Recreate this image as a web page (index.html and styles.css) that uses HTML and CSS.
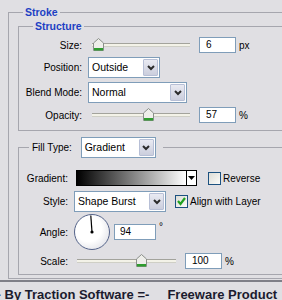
FILE: index.html
```html
<!DOCTYPE html>
<html lang="en">
<head>
  <meta charset="UTF-8" />
  <title>Layer Style – Stroke</title>
  <link rel="stylesheet" href="styles.css">
</head>
<body>

  <div class="panel">
    <fieldset class="group outer">
      <legend class="title">Stroke</legend>

      <fieldset class="group structure">
        <legend class="title">Structure</legend>

        <div class="row">
          <span class="lbl">Size:</span>
          <div class="slider">
            <div class="track"></div>
            <span class="thumb" style="left: calc(6% - 5px)">
              <svg width="11" height="13" viewBox="0 0 11 13"><path d="M5.5 0.5 L10.5 5 L10.5 12.5 L0.5 12.5 L0.5 5 Z" fill="#eeeeea" stroke="#8a8f8a"/><rect x="1" y="10" width="9" height="2.5" fill="#2e9c2e"/></svg>
            </span>
          </div>
          <span class="field">6</span>
          <span class="unit">px</span>
        </div>

        <div class="row">
          <span class="lbl">Position:</span>
          <div class="select sel-position">
            <span class="value">Outside</span>
            <span class="drop"><svg width="8" height="6" viewBox="0 0 8 6"><polyline points="1,1 4,4 7,1" fill="none" stroke="#2b2b2b" stroke-width="2"/></svg></span>
          </div>
        </div>

        <div class="row">
          <span class="lbl">Blend Mode:</span>
          <div class="select sel-blend">
            <span class="value">Normal</span>
            <span class="drop"><svg width="8" height="6" viewBox="0 0 8 6"><polyline points="1,1 4,4 7,1" fill="none" stroke="#2b2b2b" stroke-width="2"/></svg></span>
          </div>
        </div>

        <div class="row">
          <span class="lbl">Opacity:</span>
          <div class="slider">
            <div class="track"></div>
            <span class="thumb" style="left: calc(57% - 5px)">
              <svg width="11" height="13" viewBox="0 0 11 13"><path d="M5.5 0.5 L10.5 5 L10.5 12.5 L0.5 12.5 L0.5 5 Z" fill="#eeeeea" stroke="#8a8f8a"/><rect x="1" y="10" width="9" height="2.5" fill="#2e9c2e"/></svg>
            </span>
          </div>
          <span class="field">57</span>
          <span class="unit">%</span>
        </div>
      </fieldset>

      <fieldset class="group fill">
        <legend class="fill-head">
          <span class="head-lbl">Fill Type:</span>
          <span class="select sel-fill">
            <span class="value">Gradient</span>
            <span class="drop"><svg width="8" height="6" viewBox="0 0 8 6"><polyline points="1,1 4,4 7,1" fill="none" stroke="#2b2b2b" stroke-width="2"/></svg></span>
          </span>
        </legend>

        <div class="row row-gradient">
          <span class="lbl">Gradient:</span>
          <div class="gradient">
            <span class="ramp"></span>
            <span class="ramp-drop"><svg width="7" height="4" viewBox="0 0 7 4"><polygon points="0,0 7,0 3.5,4" fill="#000"/></svg></span>
          </div>
          <span class="check check-reverse"></span>
          <span class="check-lbl">Reverse</span>
        </div>

        <div class="row row-style">
          <span class="lbl">Style:</span>
          <div class="select sel-style">
            <span class="value">Shape Burst</span>
            <span class="drop"><svg width="8" height="6" viewBox="0 0 8 6"><polyline points="1,1 4,4 7,1" fill="none" stroke="#2b2b2b" stroke-width="2"/></svg></span>
          </div>
          <span class="check check-align">
            <svg width="11" height="11" viewBox="0 0 11 11"><polyline points="2,5 4.5,8 9,2" fill="none" stroke="#21a121" stroke-width="2.2"/></svg>
          </span>
          <span class="check-lbl">Align with Layer</span>
        </div>

        <div class="row row-angle">
          <span class="lbl">Angle:</span>
          <div class="dial">
            <svg width="36" height="36" viewBox="0 0 36 36"><line x1="18" y1="18" x2="16.8" y2="1.5" stroke="#000" stroke-width="1.2"/><circle cx="18" cy="18" r="1.6" fill="#000"/></svg>
          </div>
          <span class="field field-angle">94</span>
          <span class="deg">°</span>
        </div>

        <div class="row row-scale">
          <span class="lbl">Scale:</span>
          <div class="slider slider-scale">
            <div class="track"></div>
            <span class="thumb" style="left: calc(64.3% - 5px)">
              <svg width="11" height="13" viewBox="0 0 11 13"><path d="M5.5 0.5 L10.5 5 L10.5 12.5 L0.5 12.5 L0.5 5 Z" fill="#eeeeea" stroke="#8a8f8a"/><rect x="1" y="10" width="9" height="2.5" fill="#2e9c2e"/></svg>
            </span>
          </div>
          <span class="field">100</span>
          <span class="unit">%</span>
        </div>
      </fieldset>
    </fieldset>
  </div>

  <div class="footer">
    <span class="credit">=- By Traction Software =-</span>
    <span class="product">Freeware Product</span>
  </div>

</body>
</html>
```

FILE: styles.css
```css
body {
  margin: 0;
  width: 282px;
  height: 300px;
  overflow: hidden;
  background: #e0dfe3;
  font-family: "Liberation Sans", Arial, sans-serif;
  font-size: 10px;
  color: #000;
}

.panel {
  padding-top: 5px;
  width: 282px;
  overflow: hidden;
}

/* Group boxes */
.group {
  margin: 0;
  padding: 0;
  border: 1px solid #a6a6ae;
  border-right: 0;
  min-width: 0;
}

.outer {
  margin-left: 8px;
  width: 320px;
  padding: 0 0 3px 9px;
}

.title {
  padding: 0 2px;
  font-size: 10.5px;
  line-height: 14px;
  font-weight: bold;
  color: #1d3fc4;
}

.outer > .title {
  margin-left: 5px;
}

.structure > .title {
  margin-left: 14px;
}

.structure {
  padding: 4px 0 7px 0;
}

.fill {
  margin-top: 6px;
  padding: 12px 0 5px 0;
}

.fill-head {
  margin-left: 10px;
  padding: 0 7px 0 3px;
}

.fill-head .head-lbl {
  margin-right: 6px;
  vertical-align: middle;
}

.fill-head .select {
  vertical-align: middle;
}

/* Rows */
.row {
  display: flex;
  align-items: center;
  height: 16px;
  margin-top: 4px;
}

.row:first-of-type {
  margin-top: 0;
}

.structure .row:nth-of-type(2),
.structure .row:nth-of-type(3) {
  height: 21px;
}

.lbl {
  flex: none;
  text-align: right;
  margin-right: 6px;
}

.structure .lbl {
  width: 63px;
}

.fill .lbl {
  width: 49px;
}

.row-gradient {
  margin-top: 0;
}

.row-style {
  height: 21px;
  margin-top: 5px;
}

.row-angle {
  height: 36px;
  margin-top: 2px;
}

.row-scale {
  margin-top: 3px;
}

/* Slider */
.slider {
  position: relative;
  width: 98px;
  height: 16px;
  margin-left: 4px;
  display: flex;
  align-items: center;
}

.slider-scale {
  width: 99px;
  margin-left: 3px;
}

.track {
  width: 100%;
  height: 2px;
  background: #f3f2e8;
  border-top: 1px solid #a3a39c;
  border-bottom: 1px solid #cfcfc6;
}

.thumb {
  position: absolute;
  top: 1px;
  width: 11px;
  height: 13px;
}

.thumb svg {
  display: block;
}

/* Text field */
.field {
  box-sizing: border-box;
  width: 37px;
  height: 16px;
  margin-left: 9px;
  padding-left: 6px;
  background: #fff;
  border: 1px solid #7f9db9;
  line-height: 14px;
}

.field-angle {
  width: 42px;
  margin-left: 4px;
  padding-left: 5px;
}

.unit {
  margin-left: 3px;
}

.deg {
  margin-left: 3px;
  align-self: flex-start;
  margin-top: 7px;
}

/* Dropdown */
.select {
  box-sizing: border-box;
  display: inline-flex;
  height: 21px;
  background: #fff;
  border: 1px solid #7f9db9;
}

.select .value {
  flex: 1;
  padding-left: 3px;
  line-height: 19px;
  font-size: 10.5px;
  white-space: nowrap;
}

.select .drop {
  box-sizing: border-box;
  width: 15px;
  margin: 1px;
  display: flex;
  align-items: center;
  justify-content: center;
  background: linear-gradient(#e9eaf2, #cbcedd);
  border: 1px solid #b7bfd6;
  border-radius: 1px;
}

.sel-position {
  width: 72px;
}

.sel-blend {
  width: 99px;
}

.sel-fill {
  width: 75px;
}

.sel-style {
  width: 92px;
}

/* Gradient picker */
.gradient {
  display: flex;
  height: 16px;
  margin-left: 2px;
  border: 1px solid #000;
  box-sizing: border-box;
}

.ramp {
  width: 109px;
  background: linear-gradient(to right, #000, #fff);
  border-right: 1px solid #000;
}

.ramp-drop {
  width: 9px;
  background: #fff;
  display: flex;
  align-items: center;
  justify-content: center;
}

/* Checkboxes */
.check {
  box-sizing: border-box;
  width: 13px;
  height: 13px;
  border: 1px solid #1c5180;
  background: linear-gradient(135deg, #dcdcd6, #fbfbf9);
  display: flex;
  align-items: center;
  justify-content: center;
}

.check-reverse {
  margin-left: 11px;
}

.check-align {
  margin-left: 9px;
}

.check-lbl {
  margin-left: 2px;
  white-space: nowrap;
}

/* Angle dial */
.dial {
  box-sizing: border-box;
  width: 36px;
  height: 36px;
  border-radius: 50%;
  border: 1.5px solid #55648a;
  background: radial-gradient(circle at 40% 40%, #ffffff 45%, #d4d5de 100%);
  display: flex;
  align-items: center;
  justify-content: center;
}

.dial svg {
  display: block;
  margin: -1.5px;
}

/* Footer */
.footer {
  margin-top: 1px;
  border-top: 2px solid #7f7f88;
  padding-top: 5px;
  display: flex;
  white-space: nowrap;
  font-size: 13px;
  line-height: 16px;
  font-weight: bold;
  color: #1b1b2e;
}

.credit {
  margin-left: -11px;
}

.product {
  margin-left: 18px;
}
```
